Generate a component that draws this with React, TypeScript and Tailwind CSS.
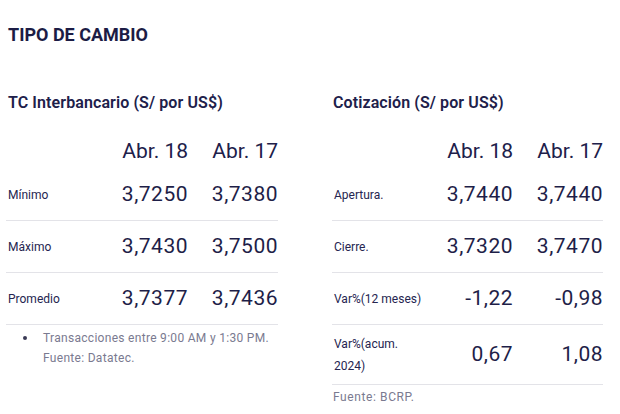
const leftRows = [
  { label: "Mínimo", a: "3,7250", b: "3,7380" },
  { label: "Máximo", a: "3,7430", b: "3,7500" },
  { label: "Promedio", a: "3,7377", b: "3,7436" },
];

const rightRows = [
  { label: "Apertura.", a: "3,7440", b: "3,7440" },
  { label: "Cierre.", a: "3,7320", b: "3,7470" },
  { label: "Var%(12 meses)", a: "-1,22", b: "-0,98" },
];

function HeaderRow() {
  return (
    <div className="grid grid-cols-[1fr_90px_90px] h-[34px] items-center text-[21px] text-[#20204a]">
      <span />
      <span className="text-right">Abr. 18</span>
      <span className="text-right">Abr. 17</span>
    </div>
  );
}

function Row({ label, a, b, tall }: { label: React.ReactNode; a: string; b: string; tall?: boolean }) {
  return (
    <div
      className={`grid grid-cols-[1fr_90px_90px] items-center border-b border-[#e3e3e8] ${tall ? "h-[60px]" : "h-[52px]"}`}
    >
      <span className="text-[12px] leading-[22px] text-[#252550] pl-[2px]">{label}</span>
      <span className="text-right text-[21px] tracking-[0.5px] text-[#1e1e48]">{a}</span>
      <span className="text-right text-[21px] tracking-[0.5px] text-[#1e1e48]">{b}</span>
    </div>
  );
}

export default function App() {
  return (
    <div className="w-[620px] h-[414px] bg-white overflow-hidden font-['Roboto',sans-serif]">
      <h1 className="pl-[8px] pt-[23px] text-[18px] leading-[24px] font-bold text-[#1c1c45]">
        TIPO DE CAMBIO
      </h1>
      <div className="grid grid-cols-[272px_271px] gap-x-[54px] pl-[6px] pt-[44px]">
        <section>
          <h2 className="pl-[2px] h-[24px] leading-[24px] text-[16px] font-semibold tracking-[0.1px] text-[#20204a]">
            TC Interbancario (S/ por US$)
          </h2>
          <div className="pt-[20px]">
            <HeaderRow />
            {leftRows.map((r) => (
              <Row key={r.label} {...r} />
            ))}
          </div>
          <div className="flex pt-[3px] text-[12px] leading-[20px] text-[#7a7a90] tracking-[0.3px]">
            <span className="w-[37px] pl-[17px] pt-[8px]">
              <span className="block w-[4px] h-[4px] rounded-full bg-[#3a3a55]" />
            </span>
            <p>
              Transacciones entre 9:00 AM y 1:30 PM.
              <br />
              Fuente: Datatec.
            </p>
          </div>
        </section>
        <section>
          <h2 className="pl-[1px] h-[24px] leading-[24px] text-[16px] font-semibold tracking-[0.1px] text-[#20204a]">
            Cotización (S/ por US$)
          </h2>
          <div className="pt-[20px]">
            <HeaderRow />
            {rightRows.map((r) => (
              <Row key={r.label} {...r} />
            ))}
            <Row
              label={
                <>
                  Var%(acum.
                  <br />
                  2024)
                </>
              }
              a="0,67"
              b="1,08"
              tall
            />
          </div>
          <p className="pl-[1px] pt-[2px] text-[12px] leading-[20px] text-[#7a7a90] tracking-[0.6px]">
            Fuente: BCRP.
          </p>
        </section>
      </div>
    </div>
  );
}
